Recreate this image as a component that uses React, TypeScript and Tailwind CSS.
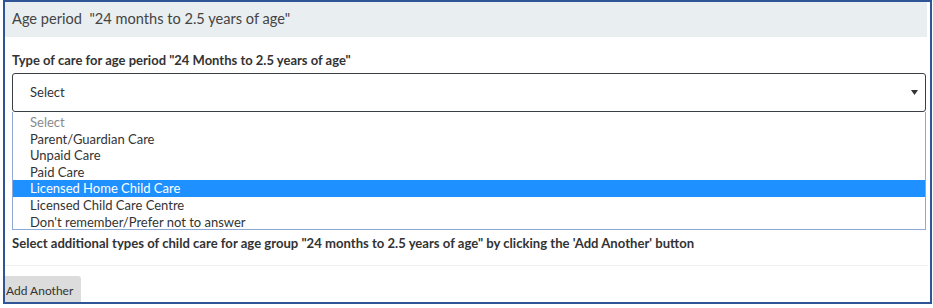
import React from "react";

const options = [
  "Parent/Guardian Care",
  "Unpaid Care",
  "Paid Care",
  "Licensed Home Child Care",
  "Licensed Child Care Centre",
  "Don't remember/Prefer not to answer",
];

export default function App() {
  const selected = "Licensed Home Child Care";

  return (
    <div className="w-[933px] h-[308px] bg-white font-['Lato','Liberation_Sans',sans-serif] text-[#333]">
      {/* outer frame */}
      <div className="ml-[3px] w-[929px] h-[304px] border-2 border-[#2f5597] overflow-hidden">
        {/* section header */}
        <div className="h-[35px] mr-[3px] bg-[#e9eef0] flex items-center pl-[7px] pb-[1px] text-[14.6px] text-[#444]">
          Age period&nbsp; "24 months to 2.5 years of age"
        </div>

        <div className="pl-[7px] pr-[4px]">
          <div className="h-[36px] pt-[15px] text-[13px] font-bold leading-[17px]">
            Type of care for age period "24 Months to 2.5 years of age"
          </div>

          {/* select */}
          <div className="h-[39px] border border-[#3a3f45] rounded-[3px] flex items-center justify-between pl-[17px] pr-[7px] text-[13px]">
            <span>Select</span>
            <svg width="7" height="5" viewBox="0 0 7 5">
              <path d="M0 0 L7 0 L3.5 5 Z" fill="#333" />
            </svg>
          </div>

          {/* open dropdown list */}
          <div className="h-[118px] border border-t-0 border-[#8fa9d6] pt-[2px] text-[13px] leading-[16.6px]">
            <div className="pl-[17px] text-[#8a8a8a]">Select</div>
            {options.map((o) => (
              <div
                key={o}
                className={
                  o === selected
                    ? "pl-[17px] bg-[#1e90ff] text-white"
                    : "pl-[17px]"
                }
              >
                {o}
              </div>
            ))}
          </div>

          <div className="h-[28px] pt-[5px] text-[13.1px] font-bold leading-[17px]">
            Select additional types of child care for age group "24 months to 2.5 years of age" by clicking the 'Add Another' button
          </div>
        </div>

        <div className="mt-[7px] mr-[2px] border-t border-[#eceff1]" />

        <div className="pt-[10px]">
          <button className="h-[28px] w-[76px] bg-[#dcdcdc] rounded-tr-[3px] text-left pl-[1px] pt-[2px] text-[12px] text-[#333]">
            Add Another
          </button>
        </div>
      </div>
    </div>
  );
}
